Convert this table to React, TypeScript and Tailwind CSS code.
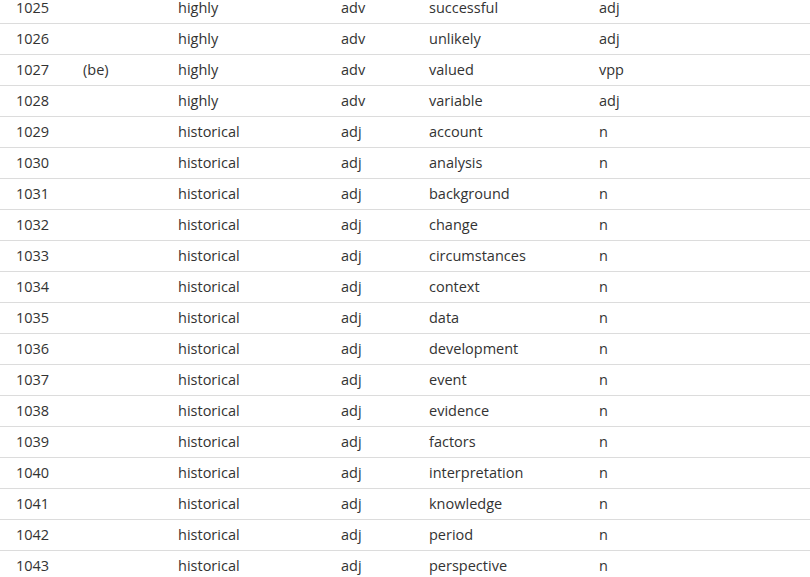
const rows: [string, string, string, string, string, string][] = [
  ['1025', '', 'highly', 'adv', 'successful', 'adj'],
  ['1026', '', 'highly', 'adv', 'unlikely', 'adj'],
  ['1027', '(be)', 'highly', 'adv', 'valued', 'vpp'],
  ['1028', '', 'highly', 'adv', 'variable', 'adj'],
  ['1029', '', 'historical', 'adj', 'account', 'n'],
  ['1030', '', 'historical', 'adj', 'analysis', 'n'],
  ['1031', '', 'historical', 'adj', 'background', 'n'],
  ['1032', '', 'historical', 'adj', 'change', 'n'],
  ['1033', '', 'historical', 'adj', 'circumstances', 'n'],
  ['1034', '', 'historical', 'adj', 'context', 'n'],
  ['1035', '', 'historical', 'adj', 'data', 'n'],
  ['1036', '', 'historical', 'adj', 'development', 'n'],
  ['1037', '', 'historical', 'adj', 'event', 'n'],
  ['1038', '', 'historical', 'adj', 'evidence', 'n'],
  ['1039', '', 'historical', 'adj', 'factors', 'n'],
  ['1040', '', 'historical', 'adj', 'interpretation', 'n'],
  ['1041', '', 'historical', 'adj', 'knowledge', 'n'],
  ['1042', '', 'historical', 'adj', 'period', 'n'],
  ['1043', '', 'historical', 'adj', 'perspective', 'n'],
]

export default function App() {
  return (
    <div className="h-[577px] w-[810px] overflow-hidden bg-white font-['Open_Sans',sans-serif] text-[14.5px] text-[#333]">
      <div className="-mt-[7px]">
        {rows.map((r) => (
          <div
            key={r[0]}
            className="grid h-[31px] grid-cols-[67px_95px_163px_88px_170px_1fr] items-center border-b border-[#dcdcdc]"
          >
            {r.map((c, i) => (
              <div key={i} className="pl-4 whitespace-nowrap">
                {c}
              </div>
            ))}
          </div>
        ))}
      </div>
    </div>
  )
}
